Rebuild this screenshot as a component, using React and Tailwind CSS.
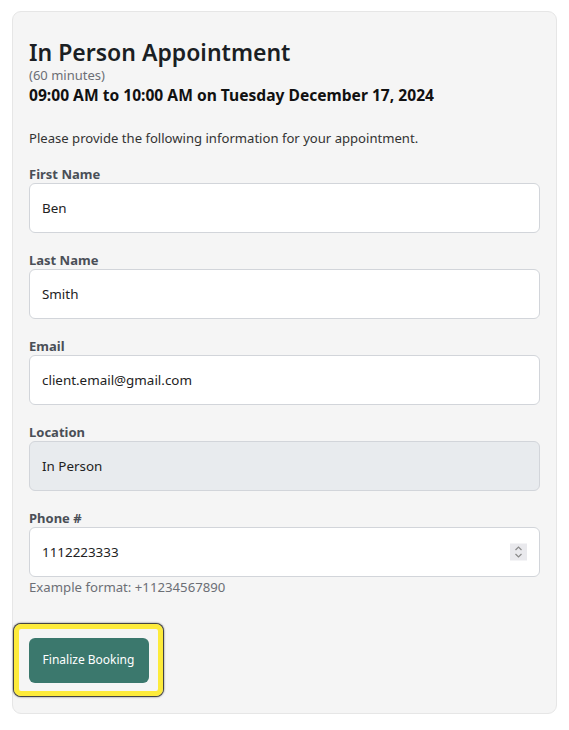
import React from "react";

const font = { fontFamily: '"Segoe UI", "Noto Sans", "Open Sans", sans-serif' };

function Spinner() {
  return (
    <div className="absolute right-[12px] top-1/2 -translate-y-1/2 w-[17px] h-[17px] bg-[#e9e9ed] flex items-center justify-center">
      <svg width="9" height="13" viewBox="0 0 9 13" fill="none" stroke="#8a8a8a" strokeWidth="1.2">
        <path d="M1.5 4.5 L4.5 1.5 L7.5 4.5" />
        <path d="M1.5 8.5 L4.5 11.5 L7.5 8.5" />
      </svg>
    </div>
  );
}

function Field({ label, value, disabled, spinner, last }) {
  return (
    <div className={last ? "" : "mb-[18px]"}>
      <label className="block text-[13px] font-bold text-[#4a4f57] leading-[18px]">{label}</label>
      <div
        className={`relative flex items-center h-[50px] rounded-[6px] border border-[#d2d5da] px-[12px] text-[13.4px] text-[#222] ${
          disabled ? "bg-[#e8ebee]" : "bg-white"
        }`}
      >
        <span>{value}</span>
        {spinner && <Spinner />}
      </div>
    </div>
  );
}

export default function App() {
  return (
    <div className="min-h-[730px] bg-white pt-[11px] px-[12px]" style={font}>
      <div className="w-[545px] bg-[#f5f5f5] border border-[#e6e6e6] rounded-[9px] px-[16px] pt-[25px] pb-[17px]">
        <h1 className="text-[23px] font-semibold text-[#1b1f24] leading-[30px]">In Person Appointment</h1>
        <div className="text-[13px] text-[#6c6f75] leading-[16px]">(60 minutes)</div>
        <div className="text-[15.6px] font-bold text-[#111] leading-[22px] mt-[1px]">09:00 AM to 10:00 AM on Tuesday December 17, 2024</div>
        <p className="text-[13.1px] text-[#333] mt-[22px] mb-[17px] leading-[20px]">
          Please provide the following information for your appointment.
        </p>
        <Field label="First Name" value="Ben" />
        <Field label="Last Name" value="Smith" />
        <Field label="Email" value="client.email@gmail.com" />
        <Field label="Location" value="In Person" disabled />
        <Field label="Phone #" value="1112223333" spinner last />
        <div className="text-[13.2px] text-[#6c6f75] mt-[1px] leading-[18px]">Example format: +11234567890</div>
        <div className="mt-[28px] -ml-[15px] w-fit rounded-[7px] border-[5px] border-[#fdeb3b] shadow-[0_0_0_1px_#444,0_0_2px_1px_#666] px-[9.5px] py-[8.5px]">
          <button className="block w-[120px] h-[45px] rounded-[6px] bg-[#3b786d] text-white text-[12px]">Finalize Booking</button>
        </div>
      </div>
    </div>
  );
}
